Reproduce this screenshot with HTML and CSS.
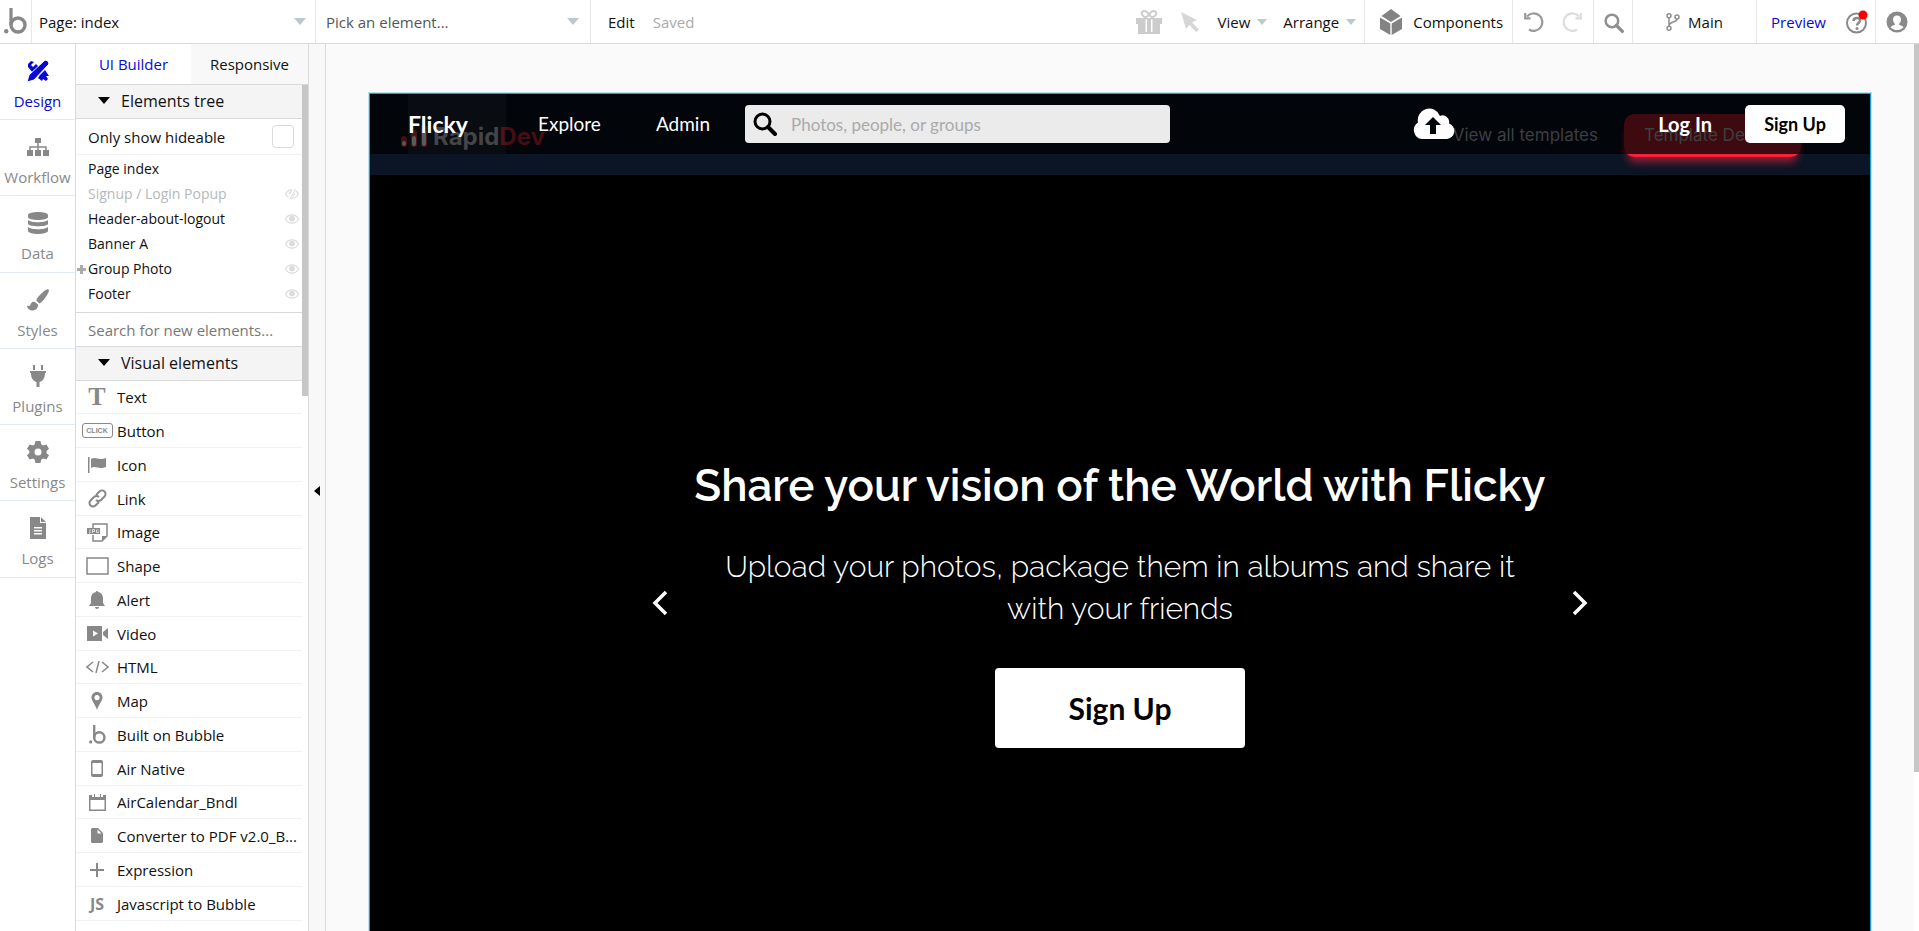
FILE: index.html
```html
<!DOCTYPE html>
<html lang="en">
<head>
  <meta charset="UTF-8" />
  <meta name="viewport" content="width=device-width, initial-scale=1.0" />
  <title>index | Editor</title>
  <link rel="stylesheet" href="styles.css">
</head>
<body>
  <!-- icons used more than once -->
  <svg class="sprite" width="0" height="0" aria-hidden="true">
    <symbol id="i-eye" viewBox="0 0 14 10"><path d="M7 .8C4 .8 1.700 2.500.5 5 1.700 7.500 4 9.200 7 9.200s5.300-1.700 6.500-4.200C12.300 2.500 10 .8 7 .8z" fill="none" stroke="currentColor" stroke-width="1.200"/><circle cx="7" cy="4.600" r="2.900" fill="currentColor"/></symbol>
    <symbol id="i-bubble" viewBox="0 0 23 26"><path d="M7 0v17" fill="none" stroke="currentColor" stroke-width="3.200"/><circle cx="14" cy="17" r="7" fill="none" stroke="currentColor" stroke-width="3.400"/><circle cx="2.200" cy="23.200" r="2.200" fill="currentColor"/></symbol>
    <symbol id="i-search" viewBox="0 0 24 24"><circle cx="9.500" cy="9.500" r="7.500" fill="none" stroke="currentColor" stroke-width="3"/><path d="M15 15l7 7" stroke="currentColor" stroke-width="4" stroke-linecap="round"/></symbol>
  </svg>

  <header class="topbar">
    <a class="logo" href="#" aria-label="Home"><svg width="23" height="26"><use href="#i-bubble"/></svg></a>
    <button class="picker page-picker">Page: index <span class="caret"></span></button>
    <button class="picker element-picker">Pick an element... <span class="caret"></span></button>
    <button class="edit">Edit</button>
    <span class="saved">Saved</span>
    <div class="tools">
      <button class="gift" aria-label="Gift"><svg width="26" height="24" viewBox="0 0 26 24" fill="#ccc"><path d="M0 8h26v6H0zM2 13h22v11H2z"/><path d="M9.500 9.500h7V22h-7z" fill="#fff"/><path d="M11 8h4v14h-4z"/><ellipse cx="9" cy="4" rx="3.500" ry="2.700" transform="rotate(30 9 4)" fill="none" stroke="#ccc" stroke-width="2"/><ellipse cx="17" cy="4" rx="3.500" ry="2.700" transform="rotate(-30 17 4)" fill="none" stroke="#ccc" stroke-width="2"/></svg></button>
      <button class="pointer" aria-label="Pointer"><svg width="19" height="20" viewBox="0 0 19 20" fill="#d6d6d6"><path d="M0 0l16 8-5 2.500 7 7-3 2.500-6.500-7L5 17z"/></svg></button>
      <button class="menu">View <span class="caret small"></span></button>
      <button class="menu arrange">Arrange <span class="caret small"></span></button>
      <button class="components"><svg width="22" height="26" viewBox="0 0 22 26" fill="#838383"><path d="M11 0l9.500 7L11 13 1.500 7z"/><path d="M0 8.500l10.300 6V26L0 20zM22 8.500l-10.300 6V26L22 20z"/></svg>Components</button>
      <div class="history">
        <button aria-label="Undo"><svg width="20" height="20" viewBox="0 0 20 20" fill="none" stroke="#999" stroke-width="2.200"><path d="M3 4.500A8.700 8.700 0 1 1 5 17.500"/><path d="M1.200 1v5.300H6.500"/></svg></button>
        <button aria-label="Redo"><svg width="20" height="20" viewBox="0 0 20 20" fill="none" stroke="#dcdcdc" stroke-width="2.200"><path d="M17 4.500A8.700 8.700 0 1 0 15 17.500"/><path d="M18.800 1v5.300H13.500"/></svg></button>
      </div>
      <button class="find" aria-label="Search"><svg width="20" height="20"><use href="#i-search"/></svg></button>
      <button class="branch"><svg width="14" height="18" viewBox="0 0 14 18" fill="none" stroke="#8f8f8f" stroke-width="1.500"><circle cx="3" cy="2.800" r="2"/><circle cx="11" cy="4" r="2"/><circle cx="3" cy="15.200" r="2"/><path d="M3 5v8M11 6c0 4-8 2-8 7"/></svg>Main</button>
      <button class="preview">Preview</button>
      <button class="help" aria-label="Help"><svg width="22" height="24" viewBox="0 0 22 24"><circle cx="10.500" cy="13" r="9.500" fill="none" stroke="#8a8a8a" stroke-width="2"/><path d="M7.500 11c0-4 6.500-4 6.500-.5 0 2.500-3 2.500-3 5" fill="none" stroke="#8a8a8a" stroke-width="2.500"/><circle cx="11" cy="18.500" r="1.500" fill="#8a8a8a"/><circle cx="17" cy="5" r="4.500" fill="#f00"/></svg></button>
      <button class="account" aria-label="Account"><svg width="22" height="22" viewBox="0 0 22 22"><circle cx="11" cy="11" r="10.500" fill="#8a8a8a"/><path d="M11 4.500c-2.700 0-4 1.800-4 4 0 1.800.8 3.500 2.200 4.500-.5 1.500-3.700 1.500-4.700 3.200 1.700 1.900 4 2.800 6.500 2.800s4.800-.9 6.500-2.800c-1-1.700-4.200-1.700-4.700-3.200 1.400-1 2.200-2.700 2.200-4.500 0-2.200-1.300-4-4-4z" fill="#fff"/></svg></button>
    </div>
  </header>

  <div class="workspace">
    <nav class="rail">
      <a class="active" href="#"><svg viewBox="0 0 22 22"><path d="M1 4l3-3 3 1-3 3 2 2 3-3 3 3-6 6-5-6zM13 15l5-5 4 6-3 0 2 3-2 2-3-2-1 2-4-3z" fill="currentColor"/><path d="M18 0q4 0 4 4L7 20l-7 2 2-7z" fill="currentColor" stroke="#fff"/></svg>Design</a>
      <a href="#"><svg viewBox="0 0 22 22" fill="currentColor"><path d="M8 2h6v5H8zM0 14h6v6H0zM8 14h6v6H8zM16 14h6v6h-6z"/><path d="M3 14v-3h16v3M11 7v7" fill="none" stroke="currentColor" stroke-width="1.500"/></svg>Workflow</a>
      <a href="#"><svg viewBox="0 0 22 22" fill="currentColor"><path d="M1 3c0-4 20-4 20 0v2c0 4-20 4-20 0zM1 8c3 3 17 3 20 0v4c-1 3-19 3-20 0zM1 15c3 3 17 3 20 0v4c-1 4-19 4-20 0z"/></svg>Data</a>
      <a href="#"><svg viewBox="0 0 22 22" fill="currentColor"><path d="M22 1c-1-2-4 0-7 3s-6 6-5.500 8l3 2.500C16 13 22 4 22 1zM8 13c-4-1-4 2.500-5 3.500s-2 .5-3 0c0 3 3 5 6 5s5.500-3 5-6z"/></svg>Styles</a>
      <a href="#"><svg viewBox="0 0 22 22" fill="currentColor"><path d="M6 0h2v5H6zM14 0h2v5h-2zM3 6h16v2h-1c0 5-2 8-5.500 9v5h-3v-5C6 16 4 13 4 8H3z"/></svg>Plugins</a>
      <a href="#"><svg viewBox="0 0 22 22" fill="currentColor"><path fill-rule="evenodd" d="M8.500 0h5l.7 3.200 2 1.200 3.200-1L22 7.800l-2.400 2.200v2.200L22 14.300l-2.600 4.300-3.200-1-2 1.200-.7 3.200h-5l-.7-3.200-2-1.200-3.200 1L0 14.300l2.400-2.200V10L0 7.800l2.600-4.400 3.200 1 2-1.200zM11 7.500a3.500 3.500 0 100 7 3.500 3.500 0 000-7z"/></svg>Settings</a>
      <a href="#"><svg viewBox="0 0 22 22" fill="currentColor"><path fill-rule="evenodd" d="M3 0h10v6h6v16H3zM14 0l5 5h-5zM7 10v1.500h8V10zm0 3v1.500h8V13zm0 3v1.500h8V16z"/></svg>Logs</a>
    </nav>

    <aside class="panel">
      <div class="tabs">
        <button class="active">UI Builder</button>
        <button>Responsive</button>
      </div>
      <div class="panel-body">
        <h2><span class="fold"></span>Elements tree</h2>
        <label class="hideable">Only show hideable <input type="checkbox"></label>
        <ul class="tree">
          <li>Page index</li>
          <li class="hidden">Signup / Login Popup <svg viewBox="0 0 14 10"><use href="#i-eye"/><path d="M4 10L10 0" stroke="#fff" stroke-width="3"/><path d="M5 10L10.500 0" stroke="currentColor"/></svg></li>
          <li>Header-about-logout <svg><use href="#i-eye"/></svg></li>
          <li>Banner A <svg><use href="#i-eye"/></svg></li>
          <li class="group">Group Photo <svg><use href="#i-eye"/></svg></li>
          <li>Footer <svg><use href="#i-eye"/></svg></li>
        </ul>
        <input class="element-search" type="text" placeholder="Search for new elements..." aria-label="Search for new elements">
        <h2><span class="fold"></span>Visual elements</h2>
        <ul class="elements">
          <li><span class="icon serif-t">T</span>Text</li>
          <li><span class="icon"><span class="click">CLICK</span></span>Button</li>
          <li><span class="icon"><svg width="18" height="16" viewBox="0 0 18 16" fill="currentColor"><path d="M0 0h1.500v16H0zM3 2c5-3 7 2 15-1v9c-8 3-10-2-15 1z"/></svg></span>Icon</li>
          <li><span class="icon"><svg width="19" height="19" viewBox="0 0 19 19" fill="none" stroke="currentColor" stroke-width="2"><path d="M8 6l3.500-3.500a3.400 3.400 0 015 5L13 11a3.400 3.400 0 01-5 0M11 13l-3.500 3.500a3.400 3.400 0 01-5-5L6 8a3.400 3.400 0 015 0"/></svg></span>Link</li>
          <li><span class="icon"><svg width="21" height="19" viewBox="0 0 21 19"><path d="M6 5V1h14v12l-5 5H6v-6" fill="none" stroke="currentColor" stroke-width="1.500"/><path d="M20 13h-5v5zM0 5h13v6H0z" fill="currentColor"/><path d="M3 6v4H2M5.500 10V6.500h2v2h-2M11.500 7H9.500v2.500h2V8.500" fill="none" stroke="#fff" stroke-width=".7"/></svg></span>Image</li>
          <li><span class="icon"><svg width="23" height="18" viewBox="0 0 23 18"><path d="M1 1h21v16H1z" fill="none" stroke="currentColor" stroke-width="1.500"/></svg></span>Shape</li>
          <li><span class="icon"><svg width="16" height="18" viewBox="0 0 16 18" fill="currentColor"><path d="M7 1c0-1.300 2-1.300 2 0 3 .5 5 3 5 6v5l2 3H0l2-3V7c0-3 2-5.500 5-6zM6 16h4c0 2.500-4 2.500-4 0z"/></svg></span>Alert</li>
          <li><span class="icon"><svg width="21" height="15" viewBox="0 0 21 15"><path d="M0 0h15v15H0zM16 6l5-4v11l-5-4z" fill="currentColor"/><path d="M6 4.500l5 3-5 3z" fill="#fff"/></svg></span>Video</li>
          <li><span class="icon"><svg width="23" height="12" viewBox="0 0 23 12" fill="none" stroke="currentColor" stroke-width="1.500"><path d="M7 1L1 6l6 5M16 1l6 5-6 5M13 0l-3 12"/></svg></span>HTML</li>
          <li><span class="icon"><svg width="12" height="18" viewBox="0 0 12 18" fill="currentColor"><path fill-rule="evenodd" d="M6 0C2.500 0 .5 2.500.5 5.500S4 12 6 18c2-6 5.500-9.500 5.500-12.500S9.500 0 6 0zm0 3a2.600 2.600 0 110 5.200A2.600 2.600 0 016 3z"/></svg></span>Map</li>
          <li><span class="icon"><svg width="17" height="19"><use href="#i-bubble"/></svg></span>Built on Bubble</li>
          <li><span class="icon"><svg width="12" height="17" viewBox="0 0 12 17"><path fill-rule="evenodd" fill="currentColor" d="M2 0h8q2 0 2 2v13q0 2-2 2H2q-2 0-2-2V2q0-2 2-2zm-.5 3v11h9V3z"/></svg></span>Air Native</li>
          <li><span class="icon"><svg width="17" height="17" viewBox="0 0 17 17"><path fill-rule="evenodd" fill="currentColor" d="M0 1h3v2h2V0h1v3h5V0h1v3h2V1h3v16H0zm1.500 5v9.500h14V6z"/></svg></span>AirCalendar_Bndl</li>
          <li><span class="icon"><svg width="12" height="15" viewBox="0 0 12 15"><path fill-rule="evenodd" fill="currentColor" d="M1 0h6l5 5v9l-1 1H1l-1-1V1zm5.500 1.500V5.500h4z"/></svg></span>Converter to PDF v2.0_B...</li>
          <li><span class="icon"><svg width="14" height="14" viewBox="0 0 14 14"><path d="M7 0v14M0 7h14" stroke="currentColor" stroke-width="2"/></svg></span>Expression</li>
          <li><span class="icon js">JS</span>Javascript to Bubble</li>
          <li><span class="icon"></span>Progress bar</li>
        </ul>
      </div>
    </aside>

    <button class="collapse" aria-label="Collapse panel"></button>

    <main class="stage">
      <section class="page">
        <div class="template-bar">
          <span class="rapid"><svg width="26" height="22" viewBox="0 0 26 22"><rect y="11" width="6" height="11" rx="3" fill="#470d14"/><rect x="10" y="5" width="6" height="17" rx="3" fill="#470d14"/><rect x="20" width="6" height="22" rx="3" fill="#470d14"/><path d="M3 18v1M13 13v6M23 8v11" stroke="#555" stroke-width="4" stroke-linecap="round"/></svg>Rapid<span>Dev</span></span>
          <span class="templates">View all templates</span>
          <span class="details">Template Details</span>
        </div>
        <header class="site-header">
          <a class="brand" href="#">Flicky</a>
          <a class="nav-link" href="#">Explore</a>
          <a class="nav-link" href="#">Admin</a>
          <label class="site-search"><svg width="24" height="24"><use href="#i-search"/></svg><input type="text" placeholder="Photos, people, or groups" aria-label="Search"></label>
          <button class="upload" aria-label="Upload"><svg width="42" height="32" viewBox="0 0 42 32"><path d="M9 31a9 9 0 01-4-16.500A11.500 11.500 0 0127 8a6.500 6.500 0 019 7.500A8 8 0 0134 31z" fill="#fff"/><path d="M20 9l8 8h-5v9h-6v-9h-5z" fill="#02050a"/></svg></button>
          <button class="login">Log In</button>
          <button class="signup">Sign Up</button>
        </header>
        <div class="banner">
          <button class="arrow" aria-label="Previous"><svg width="16" height="26" viewBox="0 0 16 26"><path d="M14 2L3 13l11 11" fill="none" stroke="#fff" stroke-width="3.500"/></svg></button>
          <div class="slide">
            <h1>Share your vision of the World with Flicky</h1>
            <p>Upload your photos, package them in albums and share it with your friends</p>
            <button class="cta">Sign Up</button>
          </div>
          <button class="arrow" aria-label="Next"><svg width="16" height="26" viewBox="0 0 16 26"><path d="M2 2l11 11L2 24" fill="none" stroke="#fff" stroke-width="3.500"/></svg></button>
        </div>
      </section>
    </main>
    <div class="page-scroll"></div>
  </div>
</body>
</html>
```

FILE: styles.css
```css
* {
  box-sizing: border-box;
}
body {
  margin: 0;
  height: 100vh;
  display: flex;
  flex-direction: column;
  overflow: hidden;
  font-family: 'Open Sans', 'Noto Sans', sans-serif;
  font-size: 15px;
  color: #111;
  background: #fff;
}
button {
  margin: 0;
  padding: 0;
  border: none;
  background: none;
  font: inherit;
  color: inherit;
  cursor: pointer;
}
a {
  color: inherit;
  text-decoration: none;
}
ul {
  margin: 0;
  padding: 0;
  list-style: none;
}
svg {
  display: block;
  flex: none;
}
.sprite {
  position: absolute;
}

/* top bar */
.topbar {
  height: 44px;
  flex: none;
  display: flex;
  border-bottom: 1px solid #d9d9d9;
}
.topbar button {
  display: flex;
  align-items: center;
}
.logo {
  width: 32px;
  padding: 8px 4px;
  border-right: 1px solid #e8e8e8;
  color: #888;
}
.topbar .picker {
  justify-content: space-between;
  border-right: 1px solid #e8e8e8;
}
.topbar .page-picker {
  width: 284px;
  padding: 0 9px 0 7px;
}
.topbar .element-picker {
  width: 275px;
  padding: 0 11px 0 10px;
  color: #555;
}
.caret {
  border: 6px solid transparent;
  border-top: 7px solid #bcc8cf;
  border-bottom: 0;
}
.caret.small {
  border-width: 6px 5px 0;
}
.topbar .edit {
  padding: 0 18px 0 17px;
}
.saved {
  align-self: center;
  color: #aaa;
}
.tools {
  display: flex;
  margin-left: auto;
}
.gift {
  width: 45px;
}
.pointer {
  width: 37px;
}
.menu {
  gap: 7px;
  margin-right: 16px;
}
.topbar .arrange {
  margin-right: 8px;
}
.topbar .components {
  gap: 11px;
  padding: 0 9px 0 15px;
  border-left: 1px solid #e8e8e8;
}
.history {
  display: flex;
  gap: 18px;
  padding: 0 11px;
  border-left: 1px solid #e8e8e8;
}
.topbar .find {
  width: 39px;
  padding: 2px 0 0 10px;
  color: #8f8f8f;
  border-left: 1px solid #e8e8e8;
}
.topbar .branch {
  width: 124px;
  gap: 8px;
  padding-left: 33px;
  border-left: 1px solid #e8e8e8;
}
.topbar .preview {
  padding: 0 20px 0 14px;
  color: #0909d4;
  border-left: 1px solid #e8e8e8;
}
.help {
  width: 29px;
}
.topbar .account {
  width: 44px;
  padding-right: 2px;
  justify-content: center;
  border-left: 1px solid #e8e8e8;
}

/* left rail */
.workspace {
  flex: 1;
  min-height: 0;
  display: flex;
}
.rail {
  width: 76px;
  flex: none;
  border-right: 1px solid #d9d9d9;
}
.rail a {
  height: 76px;
  display: flex;
  flex-direction: column;
  align-items: center;
  gap: 9px;
  padding-top: 16px;
  border-bottom: 1px solid #dfebf0;
  color: #888;
}
.rail a:nth-child(4n+3) {
  height: 77px;
}
.rail .active {
  color: #0909d4;
}
.rail svg {
  width: 22px;
  height: 22px;
}

/* element panel */
.panel {
  width: 233px;
  flex: none;
  display: flex;
  flex-direction: column;
  border-right: 1px solid #d9d9d9;
}
.tabs {
  display: flex;
  height: 41px;
  flex: none;
  border-bottom: 1px solid #d9d9d9;
}
.tabs button {
  flex: 1;
  background: #f8f8f8;
}
.tabs .active {
  flex: 0 0 115px;
  background: #fff;
  color: #0909d4;
}
.panel-body {
  flex: 1;
  min-height: 0;
  padding-right: 6px;
  overflow: hidden;
  background: linear-gradient(#c6c6c6, #c6c6c6) right top / 6px 311px no-repeat;
}
.panel h2 {
  height: 34px;
  display: flex;
  align-items: center;
  gap: 11px;
  margin: 0;
  padding: 0 0 2px 22px;
  font-size: 16px;
  font-weight: 400;
  background: #f4f4f4;
  border-bottom: 1px solid #d9d9d9;
}
.fold {
  border: 6px solid transparent;
  border-top: 7px solid #000;
  border-bottom: 0;
}
.hideable {
  height: 36px;
  display: flex;
  align-items: center;
  justify-content: space-between;
  padding: 0 8px 0 12px;
  border-bottom: 1px solid #f2f2f2;
}
.hideable input {
  appearance: none;
  width: 22px;
  height: 23px;
  margin: 0;
  border: 1px solid #d9d9d9;
  border-radius: 4px;
}
.tree {
  padding: 1px 0 6px;
  font-size: 14px;
  border-bottom: 1px solid #d9d9d9;
}
.tree li {
  height: 25px;
  display: flex;
  align-items: center;
  justify-content: space-between;
  padding: 0 3px 0 12px;
}
.tree .hidden {
  color: #b3b8bb;
}
.tree svg {
  width: 14px;
  height: 10px;
  color: #dcdcdc;
}
.tree .group {
  position: relative;
}
.group::before,
.group::after {
  content: '';
  position: absolute;
  left: 1px;
  top: 12px;
  width: 9px;
  height: 3px;
  background: #aaa;
}
.group::after {
  transform: rotate(90deg);
}
.element-search {
  display: block;
  width: 100%;
  height: 34px;
  padding: 0 12px;
  border: none;
  border-bottom: 1px solid #d9d9d9;
  font: inherit;
}
.element-search::placeholder {
  color: #777;
}
.elements li {
  height: 34px;
  display: flex;
  align-items: center;
  padding-left: 4px;
  border-bottom: 1px solid #f2f2f2;
  white-space: nowrap;
}
.elements li:nth-child(4n+1) {
  height: 33px;
}
.icon {
  width: 34px;
  flex: none;
  display: flex;
  justify-content: center;
  margin-right: 3px;
  color: #888;
}
.serif-t {
  font: bold 26px 'Liberation Serif', serif;
}
.js {
  font-size: 16px;
  font-weight: 700;
}
.click {
  width: 31px;
  height: 15px;
  border: 1px solid #888;
  border-radius: 3px;
  font: bold 7px/13px 'Liberation Sans', sans-serif;
  text-align: center;
}

.collapse {
  width: 17px;
  flex: none;
  background: #f8f8f8;
  border-right: 1px solid #d9d9d9;
}
.collapse::before {
  content: '';
  display: block;
  width: 0;
  margin: 6px 0 0 5px;
  border: 5px solid transparent;
  border-right: 6px solid #000;
  border-left: 0;
}

/* design canvas */
.stage {
  flex: 1;
  display: flex;
  padding: 49px 43px 0;
  background: #fafafa;
}
.page-scroll {
  width: 5px;
  flex: none;
  background: linear-gradient(#c6c6c6, #c6c6c6) top / 5px 728px no-repeat;
}
.page {
  flex: 1;
  position: relative;
  display: flex;
  flex-direction: column;
  border: 1px solid #1b9fd0;
  border-bottom: 0;
  outline: 1px solid #b9e2f2;
  background: #000;
  font-family: 'Lato', sans-serif;
  color: #fff;
}

/* template bar shows faintly through the site header */
.template-bar {
  position: absolute;
  top: 0;
  left: 0;
  right: 0;
  height: 81px;
  display: flex;
  align-items: flex-start;
  padding: 20px 69px 0 31px;
  background: linear-gradient(#02050a 60px, #0c1526 60px);
  font-family: 'Inter', sans-serif;
  font-size: 17px;
  color: #3d3f42;
}
.rapid {
  display: flex;
  margin-top: 11px;
  font-size: 24px;
  line-height: 24px;
  font-weight: 700;
}
.rapid svg {
  margin-right: 6px;
}
.rapid span {
  color: #470d14;
}
.templates {
  margin: 11px 26px 0 auto;
}
.details {
  width: 177px;
  height: 43px;
  padding: 11px 0 0 20px;
  border-radius: 10px;
  background: linear-gradient(#3d0a10 40px, #f5233c 40px);
  box-shadow: 0 9px 9px -4px rgba(245, 35, 60, 0.6);
}

.site-header {
  position: relative;
  height: 60px;
  flex: none;
  display: flex;
  align-items: center;
  padding: 0 25px 0 38px;
  font-size: 19px;
}
.site-header a {
  line-height: 60px;
}
.brand {
  width: 98px;
  margin-right: 32px;
  font-size: 23px;
  font-weight: 700;
  background: rgba(255, 255, 255, 0.03);
}
.nav-link {
  margin-right: 55px;
}
.nav-link + .nav-link {
  margin-right: 35px;
}
.site-search {
  width: 425px;
  height: 38px;
  display: flex;
  align-items: center;
  gap: 14px;
  padding: 0 8px;
  border-radius: 4px;
  background: #ebebeb;
  color: #000;
}
.site-search input {
  flex: 1;
  border: none;
  padding: 0;
  background: none;
  font: inherit;
  font-size: 17px;
}
.site-search input::placeholder {
  color: #aaa;
}
.upload {
  margin-left: auto;
  margin-right: 203px;
}
.login {
  margin-right: 33px;
  font-size: 20px;
  font-weight: 700;
}
.signup {
  width: 100px;
  height: 38px;
  border-radius: 5px;
  background: #fff;
  color: #000;
  font-size: 18px;
  font-weight: 700;
}

.banner {
  flex: 1;
  display: flex;
  align-items: center;
  justify-content: center;
  padding-top: 121px;
}
.slide {
  width: 904px;
  display: flex;
  flex-direction: column;
  align-items: center;
  text-align: center;
}
.slide h1 {
  margin: 0;
  font-family: 'Raleway', 'Lato', sans-serif;
  font-size: 44px;
  line-height: 56px;
  font-weight: 600;
  white-space: nowrap;
}
.slide p {
  width: 830px;
  margin: 32px 0 38px;
  font-family: 'Raleway', 'Lato', sans-serif;
  font-size: 30px;
  line-height: 42px;
  font-weight: 300;
}
.cta {
  width: 250px;
  height: 80px;
  border-radius: 4px;
  background: #fff;
  color: #000;
  font-size: 30px;
  font-weight: 700;
}
```
